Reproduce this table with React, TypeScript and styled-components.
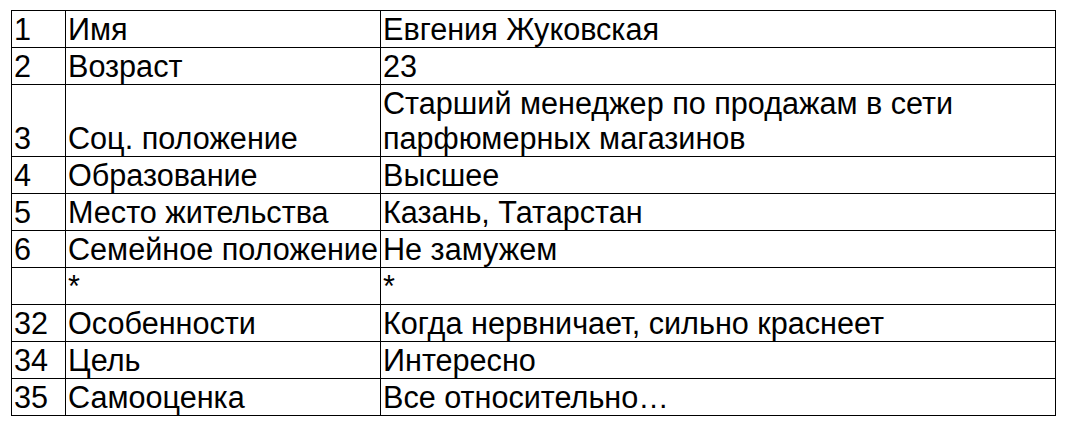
import { createGlobalStyle, styled } from "styled-components";

const GlobalStyle = createGlobalStyle`
  body {
    margin: 0;
    background: #ffffff;
    font-family: "Liberation Sans", Arial, sans-serif;
  }
`;

const Page = styled.div`
  padding: 10px 0 0 11px;
`;

const Table = styled.table`
  border-collapse: collapse;
  width: 1045px;
  table-layout: fixed;
  color: #000000;
  font-size: 30.6px;
  line-height: 35px;
`;

const Cell = styled.td`
  border: 1px solid #000000;
  padding: 1px 1px 0 2px;
  vertical-align: bottom;
  white-space: nowrap;
  overflow: hidden;
`;

const WrapCell = styled(Cell)`
  white-space: normal;
`;

type Row = { num: string; label: string; value: string; tall?: boolean };

const rows: Row[] = [
  { num: "1", label: "Имя", value: "Евгения Жуковская" },
  { num: "2", label: "Возраст", value: "23" },
  {
    num: "3",
    label: "Соц. положение",
    value: "Старший менеджер по продажам в сети парфюмерных магазинов",
    tall: true,
  },
  { num: "4", label: "Образование", value: "Высшее" },
  { num: "5", label: "Место жительства", value: "Казань, Татарстан" },
  { num: "6", label: "Семейное положение", value: "Не замужем" },
  { num: "", label: "*", value: "*" },
  { num: "32", label: "Особенности", value: "Когда нервничает, сильно краснеет" },
  { num: "34", label: "Цель", value: "Интересно" },
  { num: "35", label: "Самооценка", value: "Все относительно…" },
];

export default function App() {
  return (
    <>
      <GlobalStyle />
      <Page>
        <Table>
          <colgroup>
            <col style={{ width: 54 }} />
            <col style={{ width: 315 }} />
            <col />
          </colgroup>
          <tbody>
            {rows.map((r, i) => (
              <tr key={i}>
                <Cell>{r.num}</Cell>
                <Cell>{r.label}</Cell>
                {r.tall ? (
                  <WrapCell>
                    Старший менеджер по продажам в сети
                    <br />
                    парфюмерных магазинов
                  </WrapCell>
                ) : (
                  <Cell>{r.value || "\u00a0"}</Cell>
                )}
              </tr>
            ))}
          </tbody>
        </Table>
      </Page>
    </>
  );
}
